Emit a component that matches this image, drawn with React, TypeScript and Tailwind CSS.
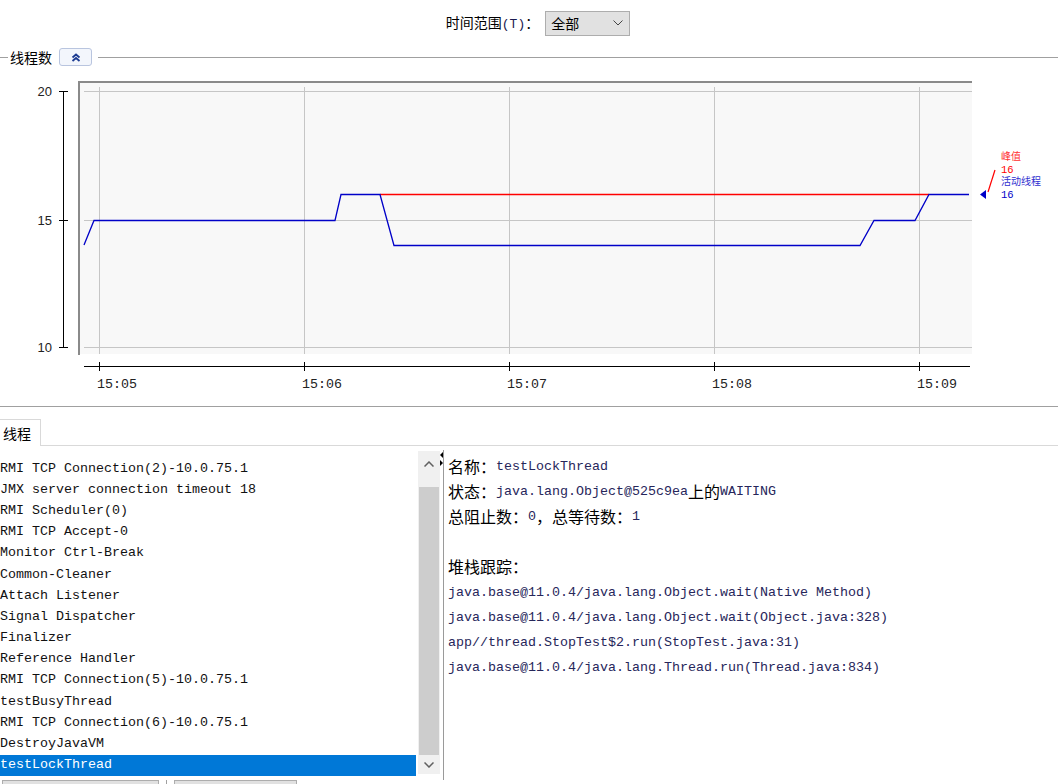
import React from 'react';

const MONO = '"Liberation Mono", "Noto Sans CJK SC", monospace';
const CJK = '"Noto Sans CJK SC", "Liberation Sans", sans-serif';

const threads = [
  'RMI TCP Connection(2)-10.0.75.1',
  'JMX server connection timeout 18',
  'RMI Scheduler(0)',
  'RMI TCP Accept-0',
  'Monitor Ctrl-Break',
  'Common-Cleaner',
  'Attach Listener',
  'Signal Dispatcher',
  'Finalizer',
  'Reference Handler',
  'RMI TCP Connection(5)-10.0.75.1',
  'testBusyThread',
  'RMI TCP Connection(6)-10.0.75.1',
  'DestroyJavaVM',
  'testLockThread',
];

const details = [
  '名称：testLockThread',
  '状态：java.lang.Object@525c9ea上的WAITING',
  '总阻止数：0，总等待数：1',
  '',
  '堆栈跟踪：',
  'java.base@11.0.4/java.lang.Object.wait(Native Method)',
  'java.base@11.0.4/java.lang.Object.wait(Object.java:328)',
  'app//thread.StopTest$2.run(StopTest.java:31)',
  'java.base@11.0.4/java.lang.Thread.run(Thread.java:834)',
];

const CJK_RE = /[\u3000-\u9fff\uff00-\uffef]/;

// split a line into CJK / latin runs so each gets its own size
const Mixed: React.FC<{ text: string }> = ({ text }) => {
  const parts = text.split(/([\u3000-\u9fff\uff00-\uffef]+)/).filter(p => p !== '');
  const pureLatin = !CJK_RE.test(text);
  return (
    <>
      {parts.map((p, i) =>
        CJK_RE.test(p) ? (
          <span key={i} className="text-[16px] text-black" style={{ fontFamily: CJK }}>{p}</span>
        ) : (
          <span
            key={i}
            className={`relative text-[13.33px] text-[#26265a] ${pureLatin ? 'top-[2px]' : 'top-[1px]'}`}
            style={{ fontFamily: MONO }}
          >
            {p}
          </span>
        )
      )}
    </>
  );
};

const xTicks = [
  { x: 99, label: '15:05' },
  { x: 304, label: '15:06' },
  { x: 509, label: '15:07' },
  { x: 714, label: '15:08' },
  { x: 919, label: '15:09' },
];

const yTicks = [
  { y: 91, label: '20' },
  { y: 220, label: '15' },
  { y: 347, label: '10' },
];

const ThreadChart = () => (
  <svg width="1058" height="338" className="block">
    <g transform="translate(0,-68)">
      {/* plot background */}
      <rect x="78" y="81" width="894" height="273" fill="#f8f8f8" />
      <line x1="79" y1="81" x2="79" y2="355" stroke="#8a8a8a" strokeWidth="2" />
      <line x1="78" y1="82" x2="972" y2="82" stroke="#8a8a8a" strokeWidth="2" />
      {yTicks.map(t => (
        <line key={t.y} x1="84" y1={t.y + 0.5} x2="972" y2={t.y + 0.5} stroke="#c6c6c6" />
      ))}
      {xTicks.map(t => (
        <line key={t.x} x1={t.x + 0.5} y1="87" x2={t.x + 0.5} y2="354" stroke="#c6c6c6" />
      ))}

      {/* y axis */}
      <line x1="63.5" y1="91" x2="63.5" y2="348" stroke="#000" />
      {yTicks.map(t => (
        <g key={t.y}>
          <line x1="59" y1={t.y + 0.5} x2="68" y2={t.y + 0.5} stroke="#000" />
          <text x="52" y={t.y + 5} textAnchor="end" fontSize="13" fill="#222" fontFamily='"Liberation Sans", sans-serif'>{t.label}</text>
        </g>
      ))}

      {/* x axis */}
      <line x1="84" y1="366.5" x2="970" y2="366.5" stroke="#000" />
      {xTicks.map(t => (
        <g key={t.x}>
          <line x1={t.x + 0.5} y1="362" x2={t.x + 0.5} y2="371" stroke="#000" />
          <text x={t.x - 2} y="388" fontSize="13.3" fill="#222" fontFamily={MONO}>{t.label}</text>
        </g>
      ))}

      {/* series */}
      <polyline points="380,194.5 929,194.5" fill="none" stroke="#ff0000" strokeWidth="1.3" />
      <polyline
        points="84,245 94,220.5 335,220.5 341,194.5 380,194.5 394,245.5 860,245.5 874,220.5 915,220.5 929,194.5 969,194.5"
        fill="none"
        stroke="#0000c8"
        strokeWidth="1.3"
      />

      {/* legend */}
      <polygon points="980,194.5 986,190 986,199" fill="#0000c8" />
      <line x1="988" y1="192" x2="995" y2="170" stroke="#ff0000" strokeWidth="1.2" />
      <text x="1001" y="160" fontSize="10" fill="#ff3030" fontFamily={CJK}>峰值</text>
      <text x="1001" y="173" fontSize="10.5" fill="#ff0000" fontFamily={MONO}>16</text>
      <text x="1001" y="185" fontSize="10" fill="#3030d0" fontFamily={CJK}>活动线程</text>
      <text x="1001" y="198" fontSize="10.5" fill="#0000c8" fontFamily={MONO}>16</text>
    </g>
  </svg>
);

export default function App() {
  return (
    <div className="w-[1058px] h-[784px] overflow-hidden bg-white flex flex-col text-black" style={{ fontFamily: CJK }}>
      {/* time range */}
      <div className="h-[46px] flex items-center justify-center gap-[6px] pl-[18px]">
        <span className="text-[14px] leading-none">
          时间范围<span className="text-[13px] text-[#1a1a50]" style={{ fontFamily: MONO }}>(T)</span>：
        </span>
        <div className="w-[85px] h-[25px] bg-[#e1e1e1] border border-[#adadad] flex items-center justify-between pl-[5px] pr-[6px]">
          <span className="text-[14px] leading-none">全部</span>
          <svg width="10" height="6" viewBox="0 0 10 6">
            <polyline points="0.5,0.5 5,5 9.5,0.5" fill="none" stroke="#444" strokeWidth="1" />
          </svg>
        </div>
      </div>

      {/* section header */}
      <div className="h-[22px] flex items-center">
        <div className="w-[8px] h-px bg-[#a0a0a0]" />
        <span className="text-[14px] leading-none ml-[2px]">线程数</span>
        <div className="ml-[7px] w-[33px] h-[18px] rounded-[3px] border border-[#b9c5df] bg-[#f3f6fc] flex items-center justify-center">
          <svg width="10" height="9" viewBox="0 0 10 9">
            <polyline points="1.5,4.5 5,1.5 8.5,4.5" fill="none" stroke="#1c3b91" strokeWidth="1.8" />
            <polyline points="1.5,8 5,5 8.5,8" fill="none" stroke="#1c3b91" strokeWidth="1.8" />
          </svg>
        </div>
        <div className="ml-[6px] flex-1 h-px bg-[#a0a0a0]" />
      </div>

      <ThreadChart />

      <div className="h-px bg-[#a0a0a0]" />

      {/* tab strip */}
      <div className="h-[39px] flex items-end">
        <div className="w-[41px] h-[27px] border-t border-r border-[#d9d9d9] bg-white flex items-center pl-[3px]">
          <span className="text-[14px] leading-none">线程</span>
        </div>
        <div className="flex-1 h-px bg-[#d9d9d9]" />
      </div>

      {/* body */}
      <div className="flex-1 flex min-h-0">
        <div className="w-[416px] pt-[12px] flex flex-col">
          {threads.map((t, i) => {
            const sel = i === threads.length - 1;
            return (
              <div
                key={t}
                className={`h-[21.2px] shrink-0 flex items-center text-[13.33px] whitespace-pre ${sel ? 'bg-[#0078d7] text-white' : 'text-[#111]'}`}
                style={{ fontFamily: MONO }}
              >
                {t}
              </div>
            );
          })}
        </div>

        {/* scrollbar */}
        <div className="ml-[2px] w-[22px] mt-[5px] h-[323px] bg-[#f0f0f0] flex flex-col items-center">
          <div className="h-[26px] flex items-center justify-center">
            <svg width="10" height="6" viewBox="0 0 10 6">
              <polyline points="0.5,5.5 5,1 9.5,5.5" fill="none" stroke="#606060" strokeWidth="1.5" />
            </svg>
          </div>
          <div className="mt-[10px] w-[20px] h-[268px] bg-[#cdcdcd]" />
          <div className="flex-1 flex items-center justify-center">
            <svg width="10" height="6" viewBox="0 0 10 6">
              <polyline points="0.5,0.5 5,5 9.5,0.5" fill="none" stroke="#606060" strokeWidth="1.5" />
            </svg>
          </div>
        </div>

        {/* split divider */}
        <div className="w-[8px] relative">
          <div className="absolute left-[3px] top-[4px] bottom-0 w-px bg-[#9a9a9a]" />
          <svg className="absolute left-0 top-[6px]" width="4" height="14" viewBox="0 0 4 14">
            <polygon points="0,3 3,0 3,6" fill="#000" />
            <polygon points="0,8 3,11 0,14" fill="#000" />
          </svg>
        </div>

        {/* details */}
        <div className="flex-1 pt-[7px]">
          {details.map((d, i) => (
            <div key={i} className="h-[25px] flex items-center whitespace-pre">
              <Mixed text={d} />
            </div>
          ))}
        </div>
      </div>

      {/* bottom buttons (cut off) */}
      <div className="h-[4px] flex shrink-0">
        <div className="ml-[2px] w-[157px] h-[8px] border border-[#adadad] bg-[#e1e1e1]" />
        <div className="ml-[7px] w-px h-[4px] bg-[#a0a0a0]" />
        <div className="ml-[7px] w-[123px] h-[8px] border border-[#adadad] bg-[#e1e1e1]" />
      </div>
    </div>
  );
}
